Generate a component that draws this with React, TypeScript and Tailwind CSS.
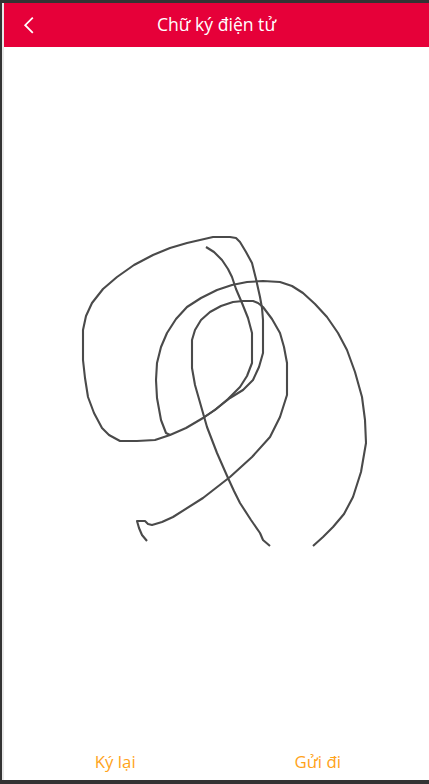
const strokes: number[][][] = [
  [[206,247],[214,252],[222,260],[228,269],[232,277],[236,289],[242,303],[248,318],[252,333],[252,348],[252,363],[247,376],[240,387],[228,399],[215,410],[203,418],[186,428],[170,435],[166,433],[161,420],[157,398],[156,380],[157,363],[161,347],[167,333],[176,319],[187,307],[201,298],[217,290],[232,285],[247,282],[263,281],[280,282],[292,286],[303,293],[315,304],[327,317],[338,333],[347,350],[355,372],[362,397],[365,420],[366,443],[361,472],[353,497],[344,514],[333,527],[323,537],[313,546]],
  [[270,546],[263,540],[260,533],[251,520],[240,503],[234,491],[228,478],[217,453],[207,427],[201,406],[195,385],[192,368],[192,350],[192,340],[195,330],[201,320],[210,312],[221,306],[233,302],[243,301],[253,301],[258,303],[263,307],[272,319],[280,333],[284,347],[287,363],[287,380],[287,395],[280,417],[270,437],[252,457],[230,477],[203,498],[173,517],[162,522],[152,525],[148,524],[145,521],[137,521],[139,528],[142,535],[147,541]],
  [[170,435],[155,440],[137,441],[120,441],[109,435],[102,428],[94,413],[88,397],[85,378],[83,360],[83,345],[83,330],[86,316],[92,303],[103,289],[117,277],[134,265],[153,255],[170,248],[187,243],[200,240],[213,237],[222,237],[230,237],[236,238],[240,242],[246,252],[252,263],[256,279],[260,297],[262,308],[263,320],[263,336],[263,353],[259,367],[253,380],[243,390],[230,398],[216,409],[203,418]],
];

function toPath(points: number[][]): string {
  return points.map((p, i) => `${i === 0 ? "M" : "L"}${p[0]} ${p[1]}`).join(" ");
}

export default function App() {
  return (
    <div className="flex h-[784px] w-[429px] flex-col overflow-hidden bg-[#333333] pt-[3px] pb-[4px] font-['Open_Sans','Noto_Sans',sans-serif]">
      <div className="flex min-h-0 flex-1">
        <div className="w-[2px] bg-[#333333]" />
        <div className="w-[2px] bg-[#e8e8e8]" />
        <main className="flex min-w-0 flex-1 flex-col bg-white">
          <header className="relative flex h-[44px] shrink-0 items-center justify-center bg-[#e60039] text-white">
            <button className="absolute left-[15px] top-[12px] flex h-[20px] w-[20px] items-center justify-center" aria-label="Quay lại">
              <svg width="12" height="20" viewBox="0 0 12 20" fill="none" stroke="currentColor" strokeWidth="1.8">
                <path d="M9.8 2.6 L2.2 10.2 L9.8 17.8" />
              </svg>
            </button>
            <h1 className="text-[17.6px] font-normal leading-none">Chữ ký điện tử</h1>
          </header>
          <section className="min-h-0 flex-1">
            <svg className="block h-[693px] w-[425px]" viewBox="4 47 425 693" fill="none" stroke="#4a4a4a" strokeWidth="2.1" strokeLinejoin="round">
              {strokes.map((s, i) => (
                <path key={i} d={toPath(s)} />
              ))}
            </svg>
          </section>
          <footer className="grid h-[40px] shrink-0 grid-cols-2 items-start text-[16.8px] text-[#ffa31a]">
            <button className="h-[40px] pl-[10px] text-center leading-[44px]">Ký lại</button>
            <button className="h-[40px] pr-[10px] text-center leading-[44px]">Gửi đi</button>
          </footer>
        </main>
      </div>
    </div>
  );
}
